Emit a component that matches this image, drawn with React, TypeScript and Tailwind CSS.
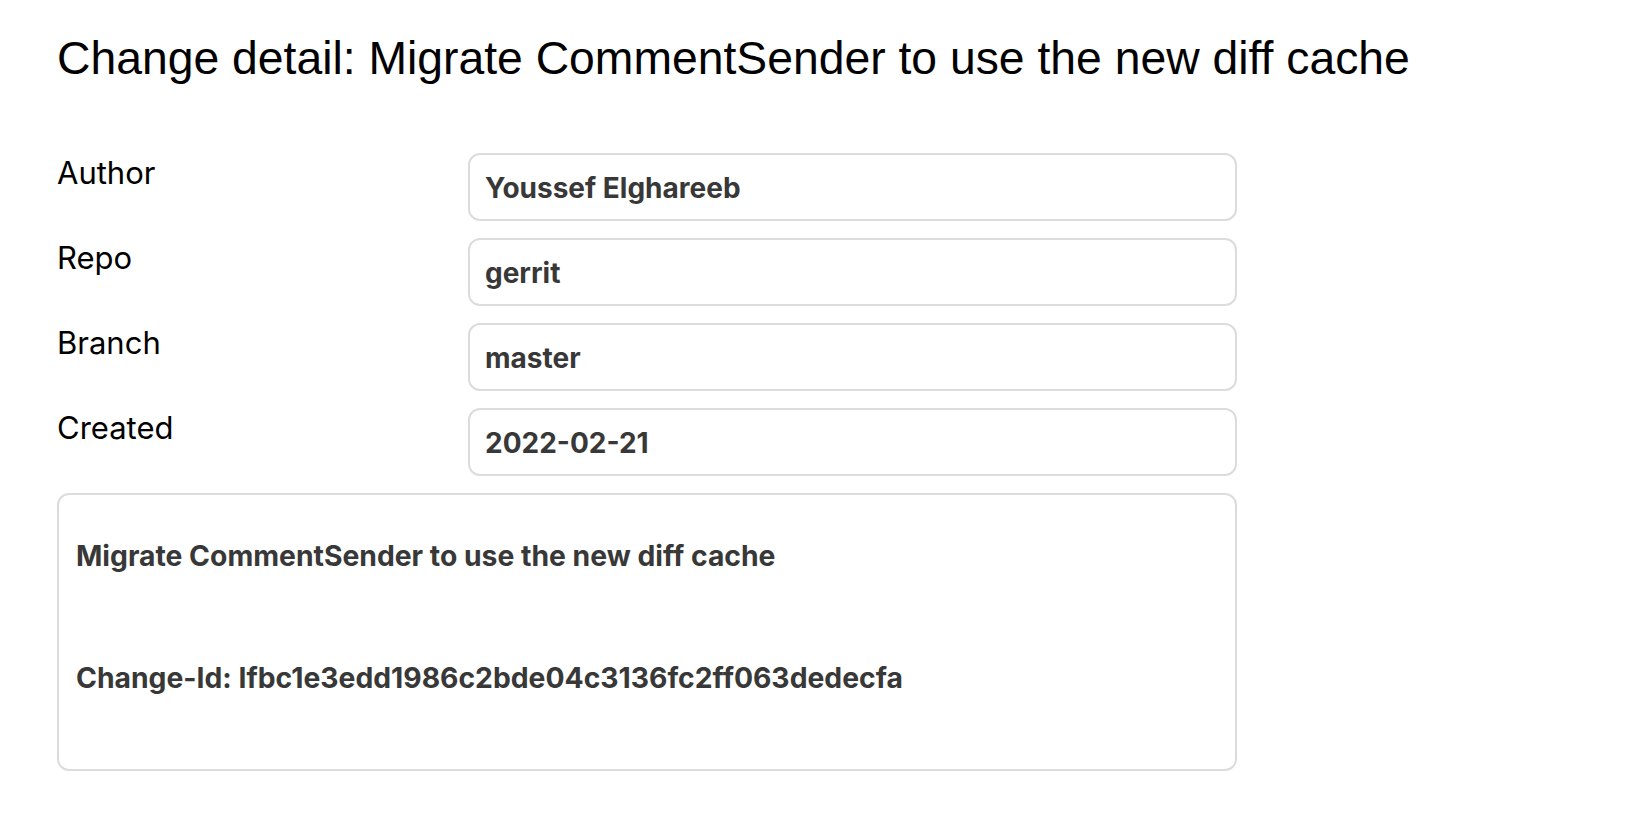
import React from "react";

const fields: { label: string; value: string }[] = [
  { label: "Author", value: "Youssef Elghareeb" },
  { label: "Repo", value: "gerrit" },
  { label: "Branch", value: "master" },
  { label: "Created", value: "2022-02-21" },
];

const App: React.FC = () => {
  return (
    <div className="min-h-screen bg-white px-[57px] pt-[27px] text-black">
      <h1 className="font-['Liberation_Sans',Arial,sans-serif] text-[46.3px] leading-[62px] font-normal">
        Change detail: Migrate CommentSender to use the new diff cache
      </h1>

      <div className="mt-[64px] w-[1180px]">
        <div className="grid grid-cols-[411px_1fr] gap-y-[17px]">
          {fields.map((f) => (
            <React.Fragment key={f.label}>
              <div className="font-['Inter',sans-serif] text-[31px] leading-[40px]">
                {f.label}
              </div>
              <div className="flex h-[68px] items-center rounded-[12px] border-2 border-[#dcdcdc] px-[15px] pt-[2px] font-['Inter',sans-serif] text-[28px] font-bold text-[#383838]">
                {f.value}
              </div>
            </React.Fragment>
          ))}
        </div>

        <div className="mt-[17px] flex h-[278px] flex-col gap-[82px] rounded-[12px] border-2 border-[#dcdcdc] px-[17px] pt-[41px] font-['Inter',sans-serif] text-[28.3px] leading-[40px] font-bold text-[#383838]">
          <p>Migrate CommentSender to use the new diff cache</p>
          <p>Change-Id: Ifbc1e3edd1986c2bde04c3136fc2ff063dedecfa</p>
        </div>
      </div>
    </div>
  );
};

export default App;
